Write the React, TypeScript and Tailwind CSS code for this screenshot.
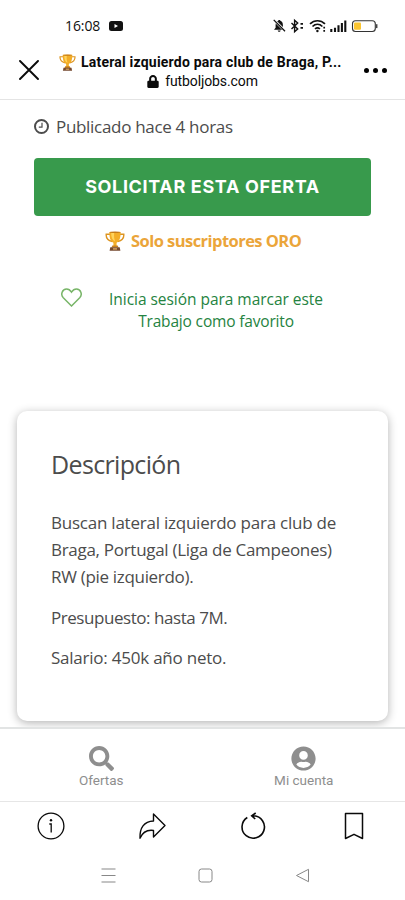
import type { ReactNode } from "react";
import { FaSearch, FaUserCircle, FaLock } from "react-icons/fa";

const paragraphs = [
  [
    { text: "Buscan lateral izquierdo para club de", spacing: "tracking-[-0.23px]" },
    { text: "Braga, Portugal (Liga de Campeones)", spacing: "tracking-[-0.29px]" },
    { text: "RW (pie izquierdo).", spacing: "tracking-[-0.31px]" },
  ],
  [{ text: "Presupuesto: hasta 7M.", spacing: "tracking-[-0.45px]" }],
  [{ text: "Salario: 450k año neto.", spacing: "tracking-[-0.23px]" }],
];

function Trophy({ className }: { className: string }) {
  return (
    <svg viewBox="0 0 20 20" className={className} fill="none">
      <path d="M5 3.2H1.2c-.3 3.8 1.3 6.2 6.1 7.3M15 3.2h3.8c.3 3.8-1.3 6.2-6.1 7.3" stroke="#dd9420" strokeWidth="1.4" />
      <path d="M4.4 1h11.2c.1 5.2-.8 9.3-4 10.8v3.4H8.4v-3.4C5.2 10.3 4.3 6.2 4.4 1z" fill="#f3ad27" />
      <path d="M6.2 2h3c-.4 3.5-.1 6 1 8.4C7.2 9.3 6.2 6.3 6.2 2z" fill="#ffd45c" />
      <ellipse cx="10" cy="1.3" rx="5.6" ry=".8" fill="#c47b19" />
      <path d="M7.3 14.5h5.4l.8 2H6.5z" fill="#c9811d" />
      <path d="M5.3 16.2h9.4l.7 3.6H4.6z" fill="#75492f" />
      <path d="M8 17.2h4v1.4H8z" fill="#d9a55c" />
    </svg>
  );
}

function StatusIcons() {
  return (
    <svg viewBox="0 0 106 16" className="h-4 w-[106px]" fill="none" stroke="#111" strokeWidth="1.2">
      <path d="M2 11.7h10.4l-1.5-1.9V7c0-2.4-1.2-3.8-2.7-4.2V2H6.4v.8C4.900 3.2 3.6 4.6 3.6 7v2.8zM5.7 12.6h3c-.3 1.7-2.7 1.7-3 0z" fill="#111" stroke="none" />
      <path d="M2.200 2.200l11 11" stroke="#fff" strokeWidth="2.600" />
      <path d="M1.700 1.900l11.300 11.300" strokeWidth="1.300" />
      <path d="M19.500 5l6.200 6-3.100 2.700V2.300l3.100 2.700-6.200 6" strokeWidth="1.400" />
      <path d="M28.500 5.900h2.500M28.500 9.900h2.500" strokeWidth="1.700" />
      <path d="M38 5.900c4.300-4.200 10.700-4.200 15 0M40.500 8.500c2.900-2.800 7-2.800 9.900 0M43 11c1.600-1.500 3.300-1.500 4.900 0" strokeWidth="1.700" />
      <circle cx="45.400" cy="13" r="1.200" fill="#111" stroke="none" />
      <path d="M52.200 8.800v1.700M52.200 12v1.700" strokeWidth="1.700" />
      <path d="M59.300 14v-3M63 14v-4.300M66.500 14V7.200M69.900 14V5M73.300 14V2.500" strokeWidth="2.100" />
      <rect x="80.500" y="2.800" width="22.800" height="10.700" rx="3" stroke="#333" strokeWidth="1.100" />
      <rect x="82" y="4.600" width="7" height="7.100" rx="1" fill="#fbc531" stroke="none" />
      <path d="M104.700 6.200v3.900" strokeWidth="1.500" stroke="#444" />
    </svg>
  );
}

function NavItem({ icon, label }: { icon: ReactNode; label: string }) {
  return (
    <div className="flex flex-1 flex-col items-center pt-[17px] text-[#8e8e8e]">
      {icon}
      <span className="mt-px font-[Roboto] text-[13.500px] leading-4">{label}</span>
    </div>
  );
}

export default function App() {
  return (
    <div className="flex h-[900px] w-[405px] flex-col overflow-hidden bg-white font-['Open_Sans',sans-serif] text-[#4c4c4c]">
      <div className="flex h-[43px] shrink-0 items-end justify-between pr-[27px] pb-[9px] pl-[65px]">
        <div className="flex items-center gap-[9px] text-[#111]">
          <span className="text-[14px] leading-4 tracking-[-0.1px]">16:08</span>
          <svg viewBox="0 0 14 10" className="h-[10px] w-[14px]">
            <rect width="14" height="10" rx="2.500" fill="#111" />
            <path d="M5.500 3v4L9 5z" fill="#fff" />
          </svg>
        </div>
        <StatusIcons />
      </div>

      <header className="flex h-[57px] shrink-0 border-b border-[#e4e4e4] font-[Roboto] text-[#0a0a0a]">
        <svg viewBox="0 0 20 20" className="mt-[17px] ml-[19px] size-5 shrink-0" stroke="#0a0a0a" strokeWidth="1.900" strokeLinecap="round">
          <path d="M1 1l18 18M19 1L1 19" />
        </svg>
        <div className="ml-[20px] w-[287px] pt-[10px]">
          <div className="flex h-[19px] items-center">
            <Trophy className="h-[17px] w-[17px] shrink-0" />
            <span className="ml-[5px] text-[14px] font-bold tracking-[0.21px] whitespace-nowrap">Lateral izquierdo para club de Braga, P...</span>
          </div>
          <div className="flex h-[19px] items-center justify-center gap-[6px]">
            <FaLock className="h-[13px] w-[12px]" />
            <span className="text-[14px] tracking-[-0.1px]">futboljobs.com</span>
          </div>
        </div>
        <div className="mt-[25px] ml-[18px] flex gap-[4px]">
          <i className="size-[5px] rounded-full bg-black" />
          <i className="size-[5px] rounded-full bg-black" />
          <i className="size-[5px] rounded-full bg-black" />
        </div>
      </header>

      <main className="flex h-[627px] shrink-0 flex-col overflow-hidden">
        <div className="mt-[15px] flex h-6 items-center pl-[34px]">
          <svg viewBox="0 0 15 15" className="mb-px size-[15px]" fill="none" stroke="#4c4c4c">
            <circle cx="7.500" cy="7.500" r="6.500" strokeWidth="2" />
            <path d="M8 3.700v4.400H4.800" strokeWidth="1.200" />
          </svg>
          <span className="ml-[7px] text-[17px] tracking-[-0.31px] whitespace-nowrap">Publicado hace 4 horas</span>
        </div>
        <button className="mt-[19px] ml-[34px] h-[58px] w-[337px] shrink-0 rounded-[4px] bg-[#389a4c] pb-[2px] font-[Inter] text-[18px] font-bold tracking-[0.65px] whitespace-nowrap text-white">
          SOLICITAR ESTA OFERTA
        </button>
        <div className="mt-[13px] flex h-6 items-center pl-[105px] text-[#eba53a]">
          <Trophy className="size-[20px]" />
          <span className="ml-[6px] text-[16.500px] font-bold tracking-[-0.55px] whitespace-nowrap">Solo suscriptores ORO</span>
        </div>
        <div className="mt-[35px] flex pl-[61px] text-[#258341]">
          <svg viewBox="0 0 21 19" className="h-[19px] w-[21px]" fill="none" stroke="#78b568" strokeWidth="1.500">
            <path d="M10.500 18L2.300 9.800C-.8 6.500 1.200 1 5.600 1c2.400 0 3.900 1.600 4.900 3.100C11.500 2.600 13 1 15.400 1c4.400 0 6.400 5.500 3.300 8.800z" />
          </svg>
          <div className="ml-[27px] w-[214px] text-center text-[15.500px] leading-[22px] whitespace-nowrap">
            <p className="tracking-[-0.04px]">Inicia sesión para marcar este</p>
            <p className="tracking-[-0.17px]">Trabajo como favorito</p>
          </div>
        </div>

        <section className="mt-[79px] ml-[17px] h-[310px] w-[371px] shrink-0 rounded-[10px] bg-white px-[34px] pt-[33px] shadow-[0_2px_10px_rgba(0,0,0,0.3)]">
          <h2 className="h-[41px] text-[25px] leading-[40px] tracking-[-0.65px] whitespace-nowrap">Descripción</h2>
          <div className="mt-[24px] flex flex-col gap-[13.500px] text-[17px] leading-[27px] whitespace-nowrap">
            {paragraphs.map((lines) => (
              <div key={lines[0].text}>
                {lines.map((line) => (
                  <p key={line.text} className={line.spacing}>{line.text}</p>
                ))}
              </div>
            ))}
          </div>
        </section>
      </main>

      <nav className="flex h-[74px] shrink-0 border-t-2 border-[#e2e4e4] bg-white">
        <NavItem icon={<FaSearch className="size-[25px]" />} label="Ofertas" />
        <NavItem icon={<FaUserCircle className="size-[25px]" />} label="Mi cuenta" />
      </nav>

      <div className="flex h-[53px] shrink-0 items-center justify-around border-t border-[#e6e6e6] pb-[4px]">
        <svg viewBox="0 0 28 28" className="size-7" fill="none" stroke="#0a0a0a" strokeWidth="1.300">
          <circle cx="14" cy="14" r="12.900" />
          <path d="M12.300 12h1.900v8.500" />
          <circle cx="14" cy="8.200" r="1.200" fill="#0a0a0a" stroke="none" />
        </svg>
        <svg viewBox="0 0 28 28" className="size-7" fill="none" stroke="#0a0a0a" strokeWidth="1.400" strokeLinejoin="round">
          <path d="M15.500 2L27 13.500 15.500 25v-6.500C8.500 17.500 4.500 20.500 2 26.300 1.500 16 6 9.300 15.500 9z" />
        </svg>
        <svg viewBox="0 0 28 28" className="size-7" fill="none" stroke="#0a0a0a" strokeWidth="1.600">
          <path d="M8.300 5.500A11.200 11.200 0 1 0 14.500 3.800h-1.700M16.700 1l-4 2.800 3.500 3.200" />
        </svg>
        <svg viewBox="0 0 28 28" className="size-7" fill="none" stroke="#0a0a0a" strokeWidth="1.500" strokeLinejoin="round">
          <path d="M5.500 1.500h17v25L14 22.300l-8.500 4.200z" />
        </svg>
      </div>

      <div className="flex h-[46px] shrink-0 items-center justify-center gap-[82px] pb-[4px] pl-[6px]">
        <svg viewBox="0 0 15 15" className="size-[15px]" fill="none" stroke="#888" strokeWidth="1.100">
          <path d="M.5 1h14M.5 7.500h14M.5 14h14" />
        </svg>
        <svg viewBox="0 0 15 15" className="size-[15px]" fill="none" stroke="#888">
          <rect x="1" y="1" width="13" height="13" rx="2.500" />
        </svg>
        <svg viewBox="0 0 15 15" className="size-[15px]" fill="none" stroke="#888" strokeLinejoin="round">
          <path d="M13.500 1.300v12.400L1.500 7.500z" />
        </svg>
      </div>
    </div>
  );
}
